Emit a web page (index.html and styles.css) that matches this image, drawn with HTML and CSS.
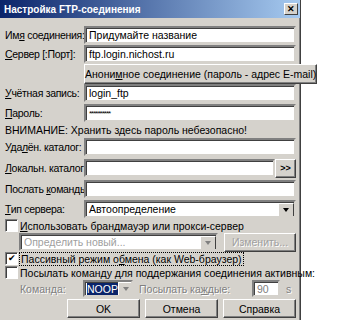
FILE: index.html
```html
<!DOCTYPE html>
<html lang="ru">
<head>
  <meta charset="UTF-8">
  <title>Настройка FTP-соединения</title>
  <link rel="stylesheet" href="styles.css">
</head>
<body>

  <div class="window">
    <div class="titlebar">
      <span>Настройка FTP-соединения</span>
      <div class="close">&#x2715;</div>
    </div>

    <div class="content">
      <div class="row">
        <label class="lbl">Им<u>я</u> соединения:</label>
        <div class="edit">Придумайте название</div>
      </div>
      <div class="row m1">
        <label class="lbl"><u>С</u>ервер [:Порт]:</label>
        <div class="edit">ftp.login.nichost.ru</div>
      </div>
      <div class="row btnrow m1">
        <div class="lbl"></div>
        <div class="btn wide">Анони<u>м</u>ное соединение (пароль - адрес E-mail)</div>
      </div>
      <div class="row">
        <label class="lbl"><u>У</u>чётная запись:</label>
        <div class="edit">login_ftp</div>
      </div>
      <div class="row m2">
        <label class="lbl"><u>П</u>ароль:</label>
        <div class="edit pass">**********</div>
      </div>
      <div class="warn">ВНИМАНИЕ: Хранить здесь пароль небезопасно!</div>
      <div class="row">
        <label class="lbl">Уда<u>л</u>ён. каталог:</label>
        <div class="edit"></div>
      </div>
      <div class="row m3">
        <label class="lbl"><u>Л</u>окальн. каталог:</label>
        <div class="edit"></div>
        <div class="btn more">&gt;&gt;</div>
      </div>
      <div class="row m3">
        <label class="lbl">Послать <u>к</u>оманды:</label>
        <div class="edit"></div>
      </div>
      <div class="row m2">
        <label class="lbl"><u>Т</u>ип сервера:</label>
        <div class="edit combo">
          <span class="val">Автоопределение</span>
          <div class="arrow"></div>
        </div>
      </div>

      <div class="check m1"><span class="box"></span><u>И</u>спользовать брандмауэр или прокси-сервер</div>
      <div class="row proxy m1">
        <div class="edit combo off">
          <span class="val">Определить новый...</span>
          <div class="arrow dim"></div>
        </div>
        <div class="btn off change">Изменить...</div>
      </div>
      <div class="check m1"><span class="box on">&#10004;</span><span class="focus">Пассивный режим о<u>б</u>мена (как Web-браузер)</span></div>
      <div class="check m1"><span class="box"></span>Посылать команду для поддержания соединения активным:</div>
      <div class="row keep">
        <span class="dis cmd">Коман<u>д</u>а:</span>
        <div class="edit combo noop">
          <span class="val sel">NOOP</span>
          <div class="arrow dim"></div>
        </div>
        <span class="dis every">Посылать ка<u>ж</u>дые:</span>
        <div class="edit secs">90</div>
        <span class="dis">s</span>
      </div>
      <div class="buttons">
        <div class="btn">OK</div>
        <div class="btn">Отмена</div>
        <div class="btn">Справка</div>
      </div>
    </div>
  </div>

</body>
</html>
```

FILE: styles.css
```css
* {
  margin: 0; padding: 0; box-sizing: border-box;
}

body {
  background: #fff;
  font-family: 'Liberation Sans', Arial, sans-serif;
  font-size: 10.5px;
  color: #000;
}

.window {
  width: 301px;
  height: 330px;
  background: #d5d2cc;
  border-right: 1px solid #404040;
  box-shadow: inset -1px 0 0 #808080;
}

.titlebar {
  height: 18px;
  display: flex;
  align-items: center;
  justify-content: space-between;
  padding: 0 2px 0 4px;
  background: linear-gradient(90deg, #0a246a, #a6caf0);
  color: #fff;
  font-weight: bold;
  font-size: 10px;
}

.close {
  width: 14px;
  height: 12px;
  background: #d5d2cc;
  color: #000;
  font-size: 9px;
  font-weight: bold;
  line-height: 11px;
  text-align: center;
  border: 1px solid;
  border-color: #fff #404040 #404040 #fff;
}

.content {
  padding: 8px 4px 0 5px;
  display: flex;
  flex-direction: column;
}

.m1 { margin-top: 1px; }
.m2 { margin-top: 2px; }
.m3 { margin-top: 3px; }

.row {
  display: flex;
  align-items: center;
  height: 18px;
}

.lbl {
  width: 79px;
  flex: none;
  white-space: nowrap;
  letter-spacing: -0.3px;
}

.edit {
  flex: 1;
  height: 18px;
  background: #fff;
  border: 2px solid;
  border-color: #808080 #d5d2cc #d5d2cc #808080;
  box-shadow: inset 1px 1px 0 #404040;
  padding: 1px 2px 0 3px;
  white-space: nowrap;
  overflow: hidden;
  line-height: 13px;
}

.pass {
  font-size: 8px;
  letter-spacing: -1px;
}

.btn {
  height: 19px;
  background: #d5d2cc;
  border: 1px solid;
  border-color: #fff #404040 #404040 #fff;
  box-shadow: inset -1px -1px 0 #808080;
  display: flex;
  align-items: center;
  justify-content: center;
  white-space: nowrap;
}

.btnrow {
  height: 20px;
}

.wide {
  flex: 1;
  height: 20px;
}

.more {
  width: 21px;
  height: 19px;
  font-size: 9px;
  font-weight: bold;
}

.warn {
  height: 15px;
  line-height: 15px;
  margin-top: 1px;
}

.combo {
  display: flex;
  align-items: center;
  padding-right: 0;
}

.combo .val {
  flex: 1;
}

.arrow {
  width: 16px;
  height: 14px;
  flex: none;
  background: #d5d2cc;
  border: 1px solid;
  border-color: #fff #404040 #404040 #fff;
  position: relative;
}

.arrow::after {
  content: "";
  position: absolute;
  left: 4px;
  top: 4px;
  border-left: 3.5px solid transparent;
  border-right: 3.5px solid transparent;
  border-top: 4px solid #000;
}

.arrow.dim::after {
  border-top-color: #808080;
}

.check {
  height: 13px;
  display: flex;
  align-items: center;
  white-space: nowrap;
}

.box {
  width: 13px;
  height: 13px;
  flex: none;
  margin-right: 2px;
  background: #fff;
  border: 1px solid;
  border-color: #808080 #fff #fff #808080;
  box-shadow: inset 1px 1px 0 #404040;
  font-size: 9px;
  line-height: 11px;
  text-align: center;
}

.focus {
  outline: 1px dotted #000;
  padding: 0 1px;
}

.proxy {
  padding-left: 14px;
  gap: 6px;
}

.off {
  color: #a0a0a0;
}

.change {
  width: 72px;
  text-shadow: 1px 1px 0 #fff;
}

.dis {
  color: #808080;
  text-shadow: 1px 1px 0 #fff;
  white-space: nowrap;
}

.keep {
  height: 17px;
  margin-top: 1px;
}

.cmd {
  width: 78px;
  padding-left: 15px;
}

.noop {
  flex: none;
  width: 50px;
  height: 17px;
  padding-left: 2px;
}

.sel {
  background: #0a246a;
  color: #fff;
}

.every {
  margin-left: 6px;
  width: 113px;
}

.secs {
  flex: none;
  width: 28px;
  height: 17px;
  color: #808080;
  margin-right: 6px;
}

.buttons {
  display: flex;
  justify-content: flex-end;
  gap: 5px;
  margin-top: 2px;
}

.buttons .btn {
  width: 73px;
  height: 19px;
}
```
